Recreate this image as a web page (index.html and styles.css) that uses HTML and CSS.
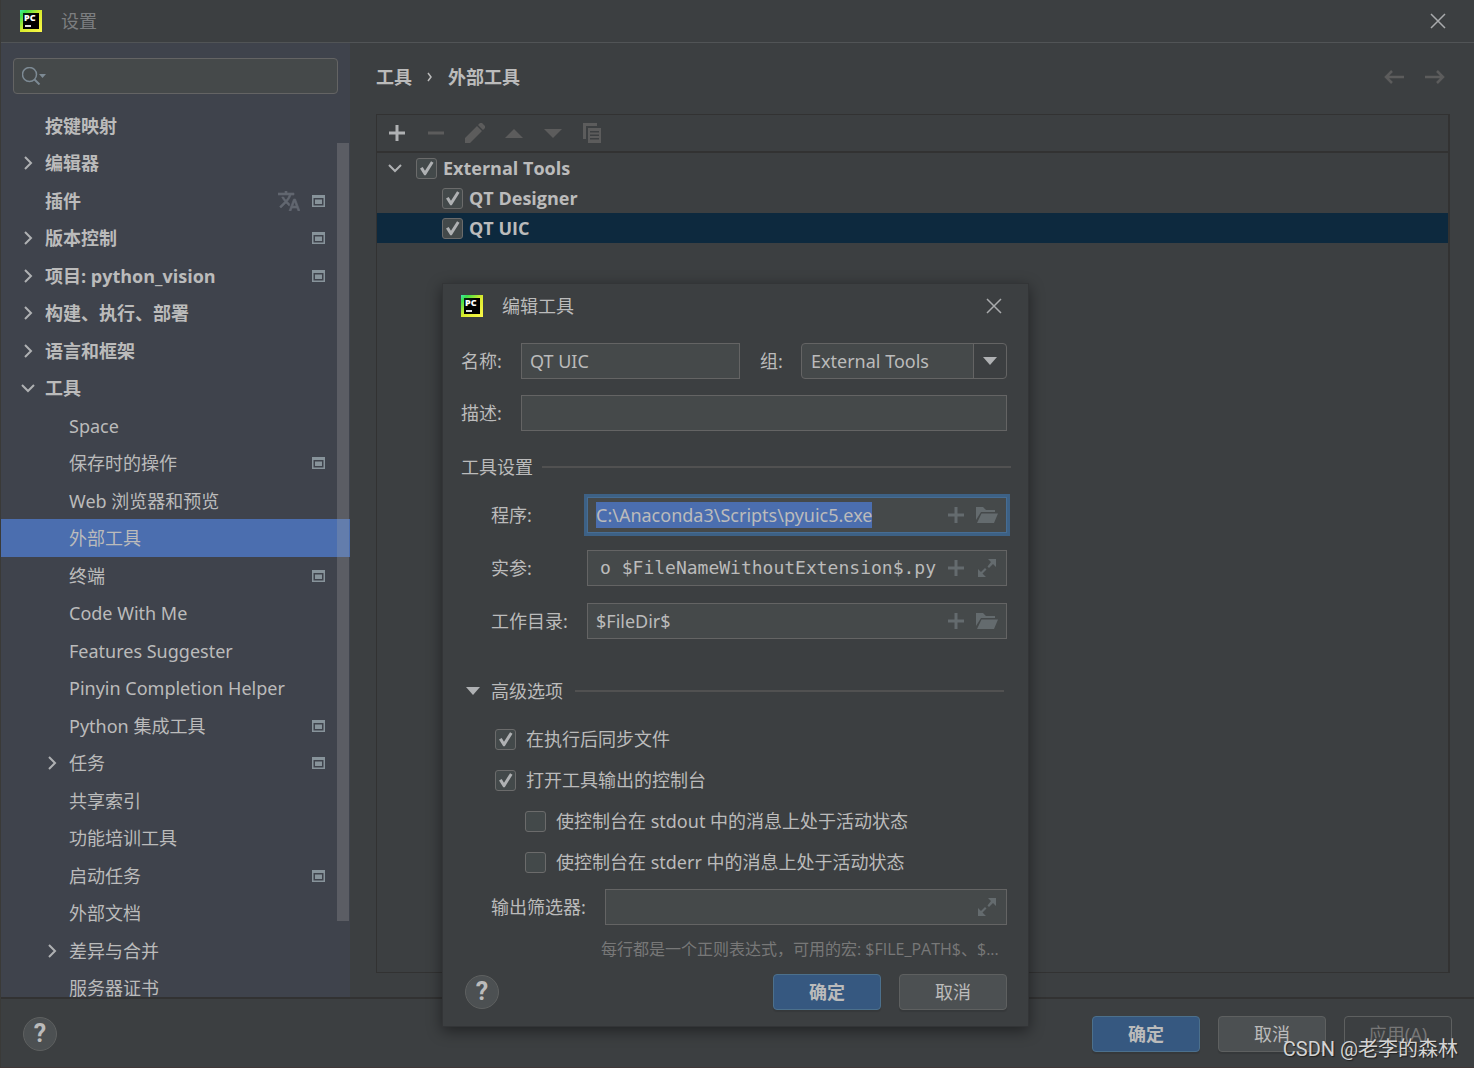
FILE: index.html
```html
<!DOCTYPE html>
<html lang="zh-CN">
<head>
<meta charset="utf-8">
<meta name="viewport" content="width=device-width, initial-scale=1">
<title>设置</title>
<link rel="stylesheet" href="styles.css">
</head>
<body>
<svg class="sprite" aria-hidden="true">
  <symbol id="i-right" viewBox="0 0 14 14"><path d="M4 1l6 6-6 6" fill="none" stroke="#afb1b3" stroke-width="2"/></symbol>
  <symbol id="i-down" viewBox="0 0 14 14"><path d="M1 4l6 6 6-6" fill="none" stroke="#afb1b3" stroke-width="2"/></symbol>
  <symbol id="i-scope" viewBox="0 0 13 12"><path fill="#87939a" fill-rule="evenodd" d="M0 0h13v12H0zM1.5 3v7.500h10V3zM3 4.500h7v4.500H3z"/></symbol>
  <symbol id="i-translate" viewBox="1 2 22 20"><path fill="#626770" stroke="#626770" stroke-width=".6" d="M12.870 15.070l-2.540-2.510.03-.03A17.520 17.520 0 0 0 14.070 6H17V4h-7V2H8v2H1v1.990h11.170C11.500 7.920 10.440 9.750 9 11.350 8.070 10.320 7.300 9.190 6.690 8h-2c.73 1.630 1.730 3.170 2.980 4.560l-5.090 5.020L4 19l5-5 3.110 3.110.76-2.040zM18.500 10h-2L12 22h2l1.120-3h4.750L21 22h2l-4.500-12zm-2.620 7l1.620-4.330L19.120 17h-3.240z"/></symbol>
  <symbol id="i-close" viewBox="0 0 16 16"><path d="M1 1l14 14M15 1L1 15" fill="none" stroke="#a9abad" stroke-width="1.500"/></symbol>
  <symbol id="i-plus" viewBox="0 0 16 16"><path d="M8 0v16M0 8h16" fill="none" stroke="currentColor" stroke-width="3"/></symbol>
  <symbol id="i-folder" viewBox="0 0 22 16"><path fill="#646b6e" d="M0 0h7l3 3h9v2H5L0 13zM5.500 6.500H22L18 16H1z"/></symbol>
  <symbol id="i-expand" viewBox="0 0 18 18"><path fill="#646b6e" d="M10 0h8v8l-3-3-4 4-1.500-1.500 3.500-4.500zM8 18H0v-8l3 3 4-4 1.500 1.500-4 4z"/></symbol>
</svg>

<div class="window">
  <header class="titlebar">
    <span class="logo">PC</span>
    <h1 class="titlebar-text">设置</h1>
    <button class="close" type="button" aria-label="关闭"><svg><use href="#i-close"/></svg></button>
  </header>

  <div class="body">
    <nav class="sidebar" aria-label="设置">
      <label class="search">
        <svg class="search-icon" viewBox="0 0 24 18"><circle cx="7.500" cy="7.500" r="7" fill="none" stroke="#7d8a94" stroke-width="1.500"/><path d="M12.500 12.500l5 5" stroke="#7d8a94" stroke-width="2"/><path d="M17 7h7l-3.500 4z" fill="#7d8a94"/></svg>
        <input class="search-input" type="text" aria-label="搜索">
      </label>
      <ul class="tree">
        <li class="node top"><span>按键映射</span></li>
        <li class="node top"><svg class="chev"><use href="#i-right"/></svg><span>编辑器</span></li>
        <li class="node top"><span>插件</span><svg class="translate"><use href="#i-translate"/></svg><svg class="scope"><use href="#i-scope"/></svg></li>
        <li class="node top"><svg class="chev"><use href="#i-right"/></svg><span>版本控制</span><svg class="scope"><use href="#i-scope"/></svg></li>
        <li class="node top"><svg class="chev"><use href="#i-right"/></svg><span>项目: python_vision</span><svg class="scope"><use href="#i-scope"/></svg></li>
        <li class="node top"><svg class="chev"><use href="#i-right"/></svg><span>构建、执行、部署</span></li>
        <li class="node top"><svg class="chev"><use href="#i-right"/></svg><span>语言和框架</span></li>
        <li class="node top"><svg class="chev"><use href="#i-down"/></svg><span>工具</span></li>
        <li class="node"><span>Space</span></li>
        <li class="node"><span>保存时的操作</span><svg class="scope"><use href="#i-scope"/></svg></li>
        <li class="node"><span>Web 浏览器和预览</span></li>
        <li class="node selected"><span>外部工具</span></li>
        <li class="node"><span>终端</span><svg class="scope"><use href="#i-scope"/></svg></li>
        <li class="node"><span>Code With Me</span></li>
        <li class="node"><span>Features Suggester</span></li>
        <li class="node"><span>Pinyin Completion Helper</span></li>
        <li class="node"><span>Python 集成工具</span><svg class="scope"><use href="#i-scope"/></svg></li>
        <li class="node"><svg class="chev"><use href="#i-right"/></svg><span>任务</span><svg class="scope"><use href="#i-scope"/></svg></li>
        <li class="node"><span>共享索引</span></li>
        <li class="node"><span>功能培训工具</span></li>
        <li class="node"><span>启动任务</span><svg class="scope"><use href="#i-scope"/></svg></li>
        <li class="node"><span>外部文档</span></li>
        <li class="node"><svg class="chev"><use href="#i-right"/></svg><span>差异与合并</span></li>
        <li class="node"><span>服务器证书</span></li>
      </ul>
      <div class="scroll-thumb"></div>
    </nav>

    <main class="content">
      <div class="crumbs">
        <span>工具</span>
        <svg class="crumb-sep" viewBox="0 0 6 10"><path d="M1 1l3 4-3 4" fill="none" stroke="#bbb" stroke-width="1.500"/></svg>
        <span>外部工具</span>
        <button class="nav-btn nav-back" type="button" aria-label="后退"><svg viewBox="0 0 20 14"><path d="M8 1L2 7l6 6M2 7h18" fill="none" stroke="#5c5c5c" stroke-width="2.500"/></svg></button>
        <button class="nav-btn" type="button" aria-label="前进"><svg viewBox="0 0 20 14"><path d="M12 1l6 6-6 6M18 7H0" fill="none" stroke="#5c5c5c" stroke-width="2.500"/></svg></button>
      </div>
      <section class="panel">
        <div class="toolbar">
          <button type="button" aria-label="添加"><svg viewBox="0 0 20 20"><path d="M10 2v16M2 10h16" stroke="#afb1b3" stroke-width="3"/></svg></button>
          <button type="button" aria-label="移除"><svg viewBox="0 0 20 20"><path d="M2 10h16" stroke="#5c5c5c" stroke-width="3"/></svg></button>
          <button type="button" aria-label="编辑"><svg viewBox="0 0 20 20"><path fill="#5c5c5c" d="M0 15L12 3l5 5L5 20H0zM13 2l2-2q1-.5 2 0l3 3q.5 1 0 2l-2 2z"/></svg></button>
          <button type="button" aria-label="上移"><svg viewBox="0 0 20 20"><path fill="#5c5c5c" d="M1 15l9-9 9 9z"/></svg></button>
          <button type="button" aria-label="下移"><svg viewBox="0 0 20 20"><path fill="#5c5c5c" d="M1 6h18l-9 9z"/></svg></button>
          <button type="button" aria-label="复制"><svg viewBox="0 0 20 20"><path fill="#5c5c5c" fill-rule="evenodd" d="M1 0h14v3H4v13H1zM6 5h13v15H6zM8 8v1.500h9V8zM8 11.500V13h9v-1.500zM8 15v1.500h9V15z"/></svg></button>
        </div>
        <ul class="tools">
          <li class="tool root"><svg class="chev"><use href="#i-down"/></svg><label class="check"><input type="checkbox" checked>External Tools</label></li>
          <li class="tool"><label class="check"><input type="checkbox" checked>QT Designer</label></li>
          <li class="tool selected-tool"><label class="check"><input type="checkbox" checked>QT UIC</label></li>
        </ul>
      </section>
    </main>
  </div>

  <footer class="footer">
    <button class="help" type="button">?</button>
    <div class="actions">
      <button class="btn primary" type="button">确定</button>
      <button class="btn" type="button">取消</button>
      <button class="btn" type="button" disabled>应用(A)</button>
    </div>
  </footer>
</div>

<form class="dialog" role="dialog" aria-labelledby="dialog-title">
  <header class="dialog-head">
    <span class="logo">PC</span>
    <h2 class="dialog-title" id="dialog-title">编辑工具</h2>
    <button class="close" type="button" aria-label="关闭"><svg><use href="#i-close"/></svg></button>
  </header>

  <div class="row">
    <label class="label-short" for="name">名称:</label>
    <input class="field name-field" id="name" type="text" value="QT UIC">
    <label class="label-group" for="group">组:</label>
    <div class="select">
      <select id="group"><option>External Tools</option></select>
      <svg class="select-arrow" viewBox="0 0 14 8"><path fill="#afb1b3" d="M0 0h14L7 8z"/></svg>
    </div>
  </div>
  <div class="row">
    <label class="label-short" for="desc">描述:</label>
    <input class="field" id="desc" type="text">
  </div>

  <h3 class="section">工具设置</h3>
  <div class="row inset">
    <label class="label-long" for="program">程序:</label>
    <div class="field combo">
      <input id="program" type="text" value="C:\Anaconda3\Scripts\pyuic5.exe" spellcheck="false">
      <svg class="plus"><use href="#i-plus"/></svg><svg class="folder"><use href="#i-folder"/></svg>
    </div>
  </div>
  <div class="row inset">
    <label class="label-long" for="args">实参:</label>
    <div class="field combo">
      <input class="mono" id="args" type="text" value="o $FileNameWithoutExtension$.py" spellcheck="false">
      <svg class="plus"><use href="#i-plus"/></svg><svg class="expand"><use href="#i-expand"/></svg>
    </div>
  </div>
  <div class="row inset">
    <label class="label-long" for="dir">工作目录:</label>
    <div class="field combo">
      <input id="dir" type="text" value="$FileDir$" spellcheck="false">
      <svg class="plus"><use href="#i-plus"/></svg><svg class="folder"><use href="#i-folder"/></svg>
    </div>
  </div>

  <h3 class="section advanced"><svg class="disclosure" viewBox="0 0 14 8"><path fill="#afb1b3" d="M0 0h14L7 8z"/></svg>高级选项</h3>
  <div class="options">
    <label class="check"><input type="checkbox" checked>在执行后同步文件</label>
    <label class="check"><input type="checkbox" checked>打开工具输出的控制台</label>
    <label class="check nested"><input type="checkbox">使控制台在 stdout 中的消息上处于活动状态</label>
    <label class="check nested"><input type="checkbox">使控制台在 stderr 中的消息上处于活动状态</label>
  </div>
  <div class="row inset filters">
    <label class="label-filter" for="filters">输出筛选器:</label>
    <div class="field combo">
      <input id="filters" type="text">
      <svg class="expand"><use href="#i-expand"/></svg>
    </div>
  </div>
  <p class="hint">每行都是一个正则表达式，可用的宏: $FILE_PATH$、$...</p>

  <div class="dialog-foot">
    <button class="help" type="button">?</button>
    <div class="actions">
      <button class="btn primary" type="button">确定</button>
      <button class="btn" type="button">取消</button>
    </div>
  </div>
</form>

<div class="watermark">CSDN @老李的森林</div>
<script src="main.js"></script>
</body>
</html>
```
FILE: styles.css
```css
* {
  box-sizing: border-box;
}

html,
body {
  height: 100%;
}

body {
  margin: 0;
  overflow: hidden;
  position: relative;
  background: #3c3f41;
  color: #bbbbbb;
  font-family: "Noto Sans", "Noto Sans CJK SC", sans-serif;
  font-size: 18px;
  line-height: 26px;
}

button,
input,
select {
  font: inherit;
  color: inherit;
}

h1,
h2,
h3,
p,
ul {
  margin: 0;
  padding: 0;
  font-size: inherit;
  font-weight: 400;
  list-style: none;
}

svg {
  display: block;
  flex: none;
}

.sprite {
  position: absolute;
  width: 0;
  height: 0;
}

/* Main window */

.window {
  display: flex;
  flex-direction: column;
  height: 100%;
  border-left: 1px solid #3a3a38;
  border-bottom: 1px solid #403838;
}

.titlebar {
  display: flex;
  align-items: center;
  flex: none;
  height: 43px;
  padding: 0 28px 0 19px;
  border-bottom: 1px solid #515456;
}

.logo {
  flex: none;
  width: 22px;
  height: 22px;
  padding: 3px 0 0 4px;
  background:
    linear-gradient(#dddddd, #dddddd) 5px 15px / 6px 2px no-repeat,
    linear-gradient(135deg, #0a2a12, #000000 40%) 3px 3px / 16px 16px no-repeat,
    linear-gradient(135deg, #3fe8b0, #3ee04a 16%, #d8ea2c 50%, #fcf84a);
  color: #ffffff;
  font-family: "Open Sans", sans-serif;
  font-size: 9px;
  font-weight: 800;
  line-height: 10px;
}

.titlebar-text {
  margin-left: 19px;
  color: #7c7e80;
}

.close {
  margin-left: auto;
  padding: 0;
  border: 0;
  background: none;
}

.close svg {
  width: 16px;
  height: 16px;
}

.body {
  display: flex;
  flex: 1;
  min-height: 0;
}

/* Sidebar */

.sidebar {
  position: relative;
  flex: none;
  width: 349px;
  overflow: hidden;
  background: #3f434c;
}

.search {
  display: flex;
  align-items: center;
  height: 36px;
  margin: 15px 12px 13px;
  padding: 0 8px;
  border: 1px solid #646464;
  border-radius: 4px;
  background: #45494a;
}

.search-icon {
  width: 24px;
  height: 18px;
}

.search-input {
  flex: 1;
  min-width: 0;
  border: 0;
  outline: 0;
  background: none;
}

.node {
  display: flex;
  align-items: center;
  height: 37px;
  padding: 0 25px 0 68px;
  white-space: nowrap;
}

.node:nth-child(even) {
  height: 38px;
}

.node.top {
  padding-left: 44px;
}

.node.top,
.tool,
.crumbs {
  font-family: "Open Sans", "Noto Sans CJK SC", sans-serif;
  font-weight: 700;
}

.node.selected {
  background: #4b6eaf;
}

.chev {
  width: 14px;
  height: 14px;
  margin: 0 10px 0 -24px;
}

.scope {
  width: 13px;
  height: 12px;
  margin-left: auto;
}

.translate {
  width: 22px;
  height: 20px;
  margin-left: auto;
}

.translate + .scope {
  margin-left: 12px;
}

.scroll-thumb {
  position: absolute;
  top: 100px;
  right: 1px;
  width: 12px;
  height: 778px;
  background: rgba(166, 166, 166, 0.27);
}

/* Content */

.content {
  display: flex;
  flex: 1;
  flex-direction: column;
  min-width: 0;
  padding: 0 24px 24px 26px;
}

.crumbs {
  display: flex;
  align-items: center;
  gap: 15px;
  height: 71px;
  padding: 0 5px 3px 0;
}

.crumb-sep {
  width: 6px;
  height: 10px;
}

.nav-btn {
  padding: 0;
  border: 0;
  background: none;
}

.nav-back {
  margin-left: auto;
  margin-right: 6px;
}

.nav-btn svg {
  width: 20px;
  height: 14px;
}

.panel {
  flex: 1;
  border: 1px solid #323232;
  border-right-width: 2px;
}

.toolbar {
  display: flex;
  align-items: center;
  gap: 19px;
  height: 38px;
  padding: 0 10px;
  border-bottom: 2px solid #323232;
}

.toolbar button {
  padding: 0;
  border: 0;
  background: none;
}

.toolbar svg {
  width: 20px;
  height: 20px;
}

.tool {
  display: flex;
  align-items: center;
  height: 30px;
  padding-left: 65px;
}

.tool.root {
  padding-left: 35px;
}

.tool .chev {
  margin-right: 14px;
}

.tool.selected-tool {
  background: #0d293e;
}

.tool .check {
  gap: 6px;
}

.check {
  display: flex;
  align-items: center;
  gap: 10px;
}

.check input {
  appearance: none;
  flex: none;
  width: 21px;
  height: 21px;
  margin: 0;
  border: 1px solid #6b6b6b;
  border-radius: 3px;
  background: #43494a;
}

.check input:checked::before {
  content: "";
  display: block;
  width: 19px;
  height: 19px;
  background: #afb1b3;
  clip-path: polygon(16% 53%, 30% 45%, 42% 64%, 74% 14%, 87% 22%, 46% 88%, 38% 88%);
}

/* Footers and buttons */

.footer {
  display: flex;
  align-items: center;
  justify-content: space-between;
  flex: none;
  height: 70px;
  padding: 1px 22px 0;
  border-top: 2px solid #323232;
}

.help {
  width: 34px;
  height: 34px;
  padding: 0;
  border: 1px solid #5e6060;
  border-radius: 50%;
  background: #4c5052;
  font-family: Roboto, sans-serif;
  font-size: 25px;
  font-weight: 700;
  line-height: 32px;
}

.actions {
  display: flex;
  gap: 18px;
}

.btn {
  width: 108px;
  height: 36px;
  padding: 0;
  border: 1px solid #5e6060;
  border-radius: 4px;
  background: #4c5052;
  box-shadow: 0 2px 1px rgba(0, 0, 0, 0.1);
}

.btn.primary {
  border-color: #4c708c;
  background: #365880;
  font-weight: 700;
}

.btn:disabled {
  background: none;
  box-shadow: none;
  color: #777777;
}

/* Edit dialog */

.dialog {
  position: absolute;
  top: 283px;
  left: 442px;
  width: 587px;
  padding: 0 21px 16px 18px;
  border: 1px solid #333537;
  background: #3c3f41;
  box-shadow: 0 4px 14px rgba(0, 0, 0, 0.45);
}

.dialog-head {
  display: flex;
  align-items: center;
  height: 43px;
  margin-bottom: 16px;
  padding-right: 5px;
}

.dialog-title {
  margin-left: 19px;
}

.row {
  display: flex;
  align-items: center;
  margin-bottom: 16px;
}

.row.inset {
  padding-left: 30px;
  margin-bottom: 17px;
}

.label-short {
  flex: none;
  width: 60px;
}

.label-long {
  flex: none;
  width: 96px;
}

.label-filter {
  flex: none;
  width: 114px;
}

.label-group {
  flex: none;
  width: 41px;
}

.field {
  flex: 1;
  min-width: 0;
  height: 36px;
  padding: 0 8px;
  border: 1px solid #646464;
  border-radius: 0;
  outline: 0;
  background: #45494a;
}

.name-field {
  margin-right: 20px;
}

.select {
  display: flex;
  align-items: center;
  position: relative;
  width: 206px;
}

.select select {
  appearance: none;
  width: 100%;
  height: 36px;
  padding: 0 36px 0 9px;
  border: 1px solid #646464;
  border-radius: 4px;
  outline: 0;
  background: linear-gradient(to left, #3c3f41 32px, #646464 32px, #646464 33px, #45494a 33px);
}

.select-arrow {
  position: absolute;
  right: 10px;
  width: 14px;
  height: 8px;
  pointer-events: none;
}

.combo {
  display: flex;
  align-items: center;
}

.combo input {
  flex: 1;
  min-width: 0;
  padding: 0;
  border: 0;
  outline: 0;
  background: none;
}

.combo:focus-within {
  border-color: #466d94;
  box-shadow: 0 0 0 3px #3d6185;
}

.combo input::selection {
  background: #4b6eaf;
  color: #bbbbbb;
}

.combo .mono {
  font-family: "DejaVu Sans Mono", monospace;
  text-align: right;
}

.plus {
  width: 16px;
  height: 16px;
  margin-left: 12px;
  color: #646b6e;
}

.folder {
  width: 22px;
  height: 16px;
  margin-left: 12px;
}

.expand {
  width: 18px;
  height: 18px;
  margin: 0 2px 0 14px;
}

.section {
  display: flex;
  align-items: center;
  height: 36px;
  margin: 18px -4px 12px 0;
}

.section::after {
  content: "";
  flex: 1;
  height: 2px;
  margin-left: 9px;
  background: #515151;
}

.section.advanced {
  margin: 34px 3px 17px 5px;
}

.section.advanced::after {
  margin-left: 12px;
}

.disclosure {
  width: 14px;
  height: 8px;
  margin-right: 11px;
}

.options {
  display: grid;
  gap: 15px;
  padding-left: 34px;
}

.nested {
  padding-left: 30px;
}

.filters {
  margin-top: 14px;
}

.row.filters {
  margin-bottom: 12px;
}

.hint {
  margin-left: 140px;
  color: #787878;
  font-family: "Open Sans", "Noto Sans CJK SC", sans-serif;
  font-size: 16px;
  line-height: 24px;
  white-space: nowrap;
}

.dialog-foot {
  display: flex;
  align-items: center;
  justify-content: space-between;
  margin-top: 13px;
  padding-left: 4px;
}

.watermark {
  position: absolute;
  right: 16px;
  bottom: 6px;
  color: #d4d4d4;
  font-family: Roboto, "Noto Sans CJK SC", sans-serif;
  font-size: 20px;
  text-shadow: 1px 1px 1px #222222;
}
```
FILE: main.js
```js
const program = document.getElementById("program");
program.focus();
program.select();
```
